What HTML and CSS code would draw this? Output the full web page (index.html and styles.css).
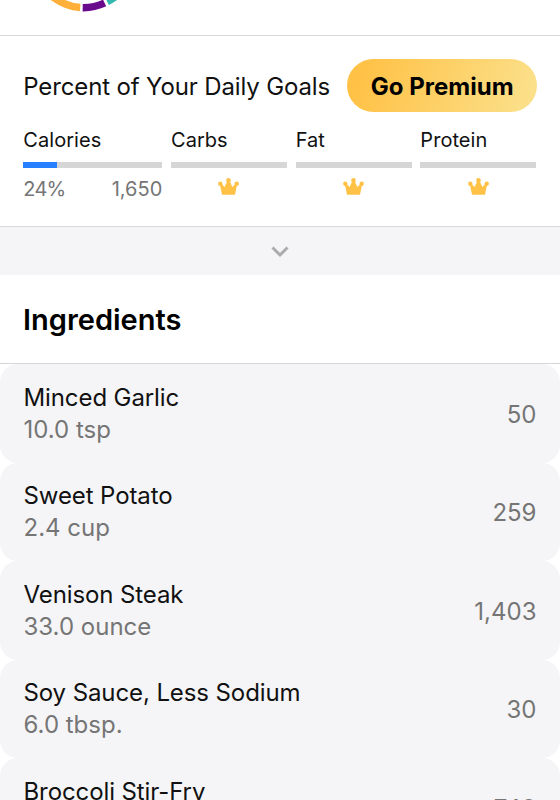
FILE: index.html
```html
<!DOCTYPE html>
<html lang="en">
<head>
    <meta charset="UTF-8">
    <meta name="viewport" content="width=device-width, initial-scale=1.0">
    <title>Nutrition</title>
    <link rel="stylesheet" href="styles.css">
</head>
<body>
    <!-- Macro ring -->
    <section class="macros">
        <svg class="ring" width="168" height="35" viewBox="0 0 168 35">
            <g fill="none" stroke-width="7.4">
                <path d="M38 -23 A49.4 49.4 0 0 0 80.2 7.5" stroke="#ffb03b"/>
                <path d="M82.7 7.7 A49.4 49.4 0 0 0 104.6 3" stroke="#6a0a8c"/>
                <path d="M107.2 1.6 A49.4 49.4 0 0 0 131 -23" stroke="#33b8b0"/>
            </g>
        </svg>
    </section>

    <!-- Daily goals -->
    <section class="goals">
        <div class="goals-header">
            <h2>Percent of Your Daily Goals</h2>
            <button class="btn-premium">Go Premium</button>
        </div>
        <div class="goals-grid">
            <div class="goal">
                <div class="goal-name">Calories</div>
                <div class="bar"><div class="bar-fill" style="width: 24%"></div></div>
                <div class="goal-values"><span class="percent">24%</span><span>1,650</span></div>
            </div>
            <div class="goal">
                <div class="goal-name">Carbs</div>
                <div class="bar"></div>
                <svg class="crown" viewBox="0 0 21 17"><use href="#crown"/></svg>
            </div>
            <div class="goal">
                <div class="goal-name">Fat</div>
                <div class="bar"></div>
                <svg class="crown" viewBox="0 0 21 17"><use href="#crown"/></svg>
            </div>
            <div class="goal">
                <div class="goal-name">Protein</div>
                <div class="bar"></div>
                <svg class="crown" viewBox="0 0 21 17">
                    <g id="crown">
                        <path d="M1.8 6 L3.2 5.4 L6.6 9 L9.4 3 H11.6 L14.4 9 L17.8 5.4 L19.2 6 L17 16.8 H4 Z"/>
                        <circle cx="2.3" cy="5.8" r="2.2"/>
                        <circle cx="10.5" cy="2.4" r="2.3"/>
                        <circle cx="18.7" cy="5.8" r="2.2"/>
                    </g>
                </svg>
            </div>
        </div>
    </section>

    <!-- Expand toggle -->
    <div class="expand">
        <svg width="20" height="14" viewBox="0 0 20 14">
            <path d="M2.5 2.5 L10 10 L17.5 2.5" fill="none" stroke="#acacac" stroke-width="3"/>
        </svg>
    </div>

    <!-- Ingredients -->
    <section class="ingredients">
        <h1>Ingredients</h1>
        <ul class="ingredient-list">
            <li class="ingredient">
                <div><p class="name">Minced Garlic</p><p class="amount">10.0 tsp</p></div>
                <span class="calories">50</span>
            </li>
            <li class="ingredient">
                <div><p class="name">Sweet Potato</p><p class="amount">2.4 cup</p></div>
                <span class="calories">259</span>
            </li>
            <li class="ingredient">
                <div><p class="name">Venison Steak</p><p class="amount">33.0 ounce</p></div>
                <span class="calories">1,403</span>
            </li>
            <li class="ingredient">
                <div><p class="name">Soy Sauce, Less Sodium</p><p class="amount">6.0 tbsp.</p></div>
                <span class="calories">30</span>
            </li>
            <li class="ingredient">
                <div><p class="name">Broccoli Stir-Fry</p><p class="amount">&nbsp;</p></div>
                <span class="calories">740</span>
            </li>
        </ul>
    </section>
</body>
</html>
```
FILE: styles.css
```css
/* Reset & Global Styling */
* {
    margin: 0;
    padding: 0;
    box-sizing: border-box;
}
body {
    height: 800px;
    overflow: hidden;
    font-family: Inter, sans-serif;
    font-size: 24px;
    background-color: #fff;
    color: #111;
}

/* Macro ring */
.macros {
    height: 36px;
    border-bottom: 1.5px solid #d8d8d8;
}
.ring {
    display: block;
}

/* Daily goals */
.goals {
    height: 190px;
    padding: 23px 23.3px 0;
}
.goals-header {
    display: flex;
    justify-content: space-between;
    align-items: center;
    height: 53px;
}
.goals-header h2 {
    padding-top: 2px;
    font-size: 24px;
    font-weight: 400;
    letter-spacing: -0.14px;
    white-space: nowrap;
}
.btn-premium {
    width: 190px;
    height: 53px;
    padding: 1px 0 0 1px;
    border: none;
    border-radius: 27px;
    background: linear-gradient(110deg, #ffc247 10%, #fbe08a 95%);
    color: #000;
    font-family: inherit;
    font-size: 24px;
    font-weight: 700;
    white-space: nowrap;
}
.goals-grid {
    display: grid;
    grid-template-columns: 139px 116px 116px 116px;
    column-gap: 8.7px;
    margin-top: 15px;
}
.goal-name {
    height: 35px;
    font-size: 20px;
    line-height: 26px;
    letter-spacing: 0.05px;
}
.bar {
    height: 6px;
    background-color: #d6d6d6;
}
.bar-fill {
    height: 100%;
    background-color: #2680ff;
}
.goal-values {
    display: flex;
    justify-content: space-between;
    margin-top: 8px;
    color: #757575;
    font-size: 20px;
    line-height: 27px;
}
.percent {
    letter-spacing: -0.8px;
}
.crown {
    display: block;
    width: 21px;
    height: 17px;
    margin: 10px auto 0;
    fill: #ffc247;
}

/* Expand toggle */
.expand {
    display: flex;
    justify-content: center;
    align-items: center;
    height: 49px;
    padding-top: 2px;
    border-top: 1.5px solid #d8d8dc;
    background-color: #f5f5f7;
}

/* Ingredients */
.ingredients h1 {
    height: 89px;
    padding-left: 23px;
    border-bottom: 1px solid #d5d5da;
    color: #000;
    font-size: 29px;
    font-weight: 600;
    line-height: 90px;
}
.ingredient-list {
    list-style: none;
}
.ingredient {
    display: flex;
    justify-content: space-between;
    align-items: center;
    height: 98.5px;
    padding: 1px 23.5px 0;
    border-radius: 18px;
    background-color: #f5f5f7;
    line-height: 32px;
}
.name {
    letter-spacing: -0.1px;
}
.amount, .calories {
    color: #757575;
}
.calories {
    padding-top: 2px;
}
```
